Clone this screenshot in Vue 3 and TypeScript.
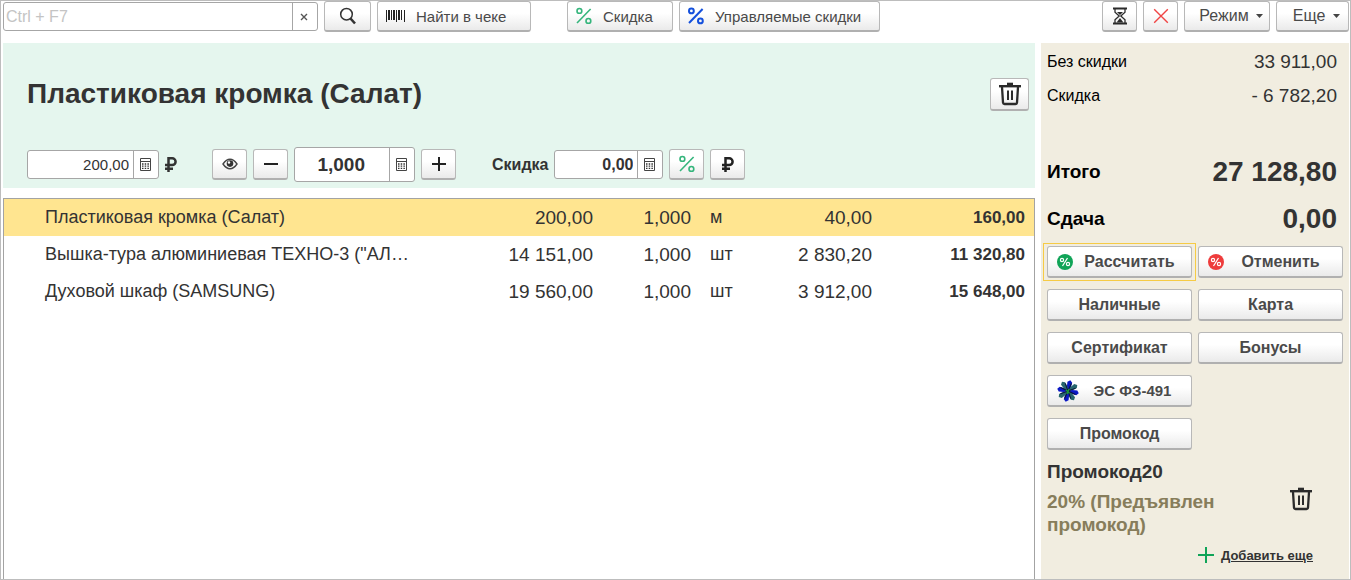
<script setup lang="ts">
import { ref } from 'vue'

interface ReceiptLine {
  name: string
  price: string
  qty: string
  unit: string
  discount: string
  sum: string
}

const lines: ReceiptLine[] = [
  { name: 'Пластиковая кромка (Салат)', price: '200,00', qty: '1,000', unit: 'м', discount: '40,00', sum: '160,00' },
  { name: 'Вышка-тура алюминиевая ТЕХНО-3 ("АЛ…', price: '14 151,00', qty: '1,000', unit: 'шт', discount: '2 830,20', sum: '11 320,80' },
  { name: 'Духовой шкаф (SAMSUNG)', price: '19 560,00', qty: '1,000', unit: 'шт', discount: '3 912,00', sum: '15 648,00' },
]

const selected = ref(0)
const search = ref('')
const price = ref('200,00')
const quantity = ref('1,000')
const discount = ref('0,00')

const bars = [
  [0, 1, 12], [2, 2, 10], [5, 1, 10], [7, 2, 10], [10, 1, 12], [12, 2, 10], [15, 1, 10], [18, 1, 12],
]
const petals = [0, 45, 90, 135, 180, 225, 270, 315]
</script>

<template>
  <div class="window">
    <header class="toolbar">
      <div class="field search">
        <input v-model="search" type="text" placeholder="Ctrl + F7" aria-label="Поиск" />
        <button type="button" class="addon" aria-label="Очистить">
          <svg width="8" height="8" viewBox="0 0 8 8"><path d="M1 1l6 6M7 1L1 7" stroke="#555" stroke-width="1.4" /></svg>
        </button>
      </div>
      <button type="button" class="btn magnify" aria-label="Найти">
        <svg width="18" height="18" viewBox="0 0 18 18" fill="none" stroke="#333">
          <circle cx="7.5" cy="7.2" r="5.8" stroke-width="1.5" /><path d="M11.5 11.5L16 16.5" stroke-width="2.6" />
        </svg>
      </button>
      <button type="button" class="btn find">
        <svg width="19" height="12" viewBox="0 0 19 12" fill="#222">
          <rect v-for="b in bars" :key="b[0]" :x="b[0]" y="0" :width="b[1]" :height="b[2]" />
        </svg>
        <span>Найти в чеке</span>
      </button>
      <button type="button" class="btn disc">
        <svg width="16" height="18" viewBox="0 0 16 18" fill="none" stroke="#35b57c" stroke-width="1.6">
          <circle cx="3.4" cy="3.9" r="2.4" /><circle cx="12.4" cy="13.9" r="2.4" /><path d="M14.6 2L1 16" />
        </svg>
        <span>Скидка</span>
      </button>
      <button type="button" class="btn managed">
        <svg width="16" height="18" viewBox="0 0 16 18" fill="none" stroke="#1450dc" stroke-width="2">
          <circle cx="3.4" cy="3.9" r="2.4" /><circle cx="12.4" cy="13.9" r="2.4" /><path d="M14.6 2L1 16" />
        </svg>
        <span>Управляемые скидки</span>
      </button>
      <span class="spacer"></span>
      <button type="button" class="btn w35" aria-label="Отложить чек">
        <svg width="16" height="18" viewBox="0 0 16 18" fill="none" stroke="#2b2b2b" stroke-width="1.3">
          <path d="M1 1.5h14M1 16.5h14" stroke-width="2" />
          <path d="M3 2v3.2L7.2 9 3 12.8V16M13 2v3.2L8.8 9l4.2 3.8V16" />
          <path d="M5 5h6L8 8zM4.6 15.5L8 11l3.4 4.5z" fill="#2b2b2b" stroke="none" />
        </svg>
      </button>
      <button type="button" class="btn w35" aria-label="Отменить чек">
        <svg width="16" height="16" viewBox="0 0 16 16"><path d="M1.2 1.2l13.6 13.6M14.8 1.2L1.2 14.8" stroke="#f04545" stroke-width="1.4" /></svg>
      </button>
      <button type="button" class="btn mode">
        <span>Режим</span>
        <svg width="7" height="4" viewBox="0 0 7 4"><path d="M0 0h7L3.5 4z" fill="#444" /></svg>
      </button>
      <button type="button" class="btn more">
        <span>Еще</span>
        <svg width="7" height="4" viewBox="0 0 7 4"><path d="M0 0h7L3.5 4z" fill="#444" /></svg>
      </button>
    </header>

    <div class="body">
      <main class="left">
        <section class="item">
          <div class="item-head">
            <h1>Пластиковая кромка (Салат)</h1>
            <button type="button" class="btn trash" aria-label="Удалить строку">
              <svg width="22" height="24" viewBox="0 0 22 24" fill="none" stroke="#2b2b2b" stroke-width="2">
                <path d="M0 4.2h22" stroke-width="2.4" /><path d="M8 2.2h6" stroke-width="3" />
                <path d="M3 5L4 20.6Q4.2 22 5.5 22H16.5Q17.8 22 18 20.6L19 5" stroke-width="2.3" /><path d="M9 8.5V18M13 8.5V18" />
              </svg>
            </button>
          </div>
          <div class="controls">
            <div class="field price">
              <input v-model="price" type="text" aria-label="Цена" />
              <button type="button" class="addon" aria-label="Калькулятор цены">
                <svg width="11" height="13" viewBox="0 0 11 13"><path d="M.5.5h10v12H.5zM.5 3.5h10" fill="none" stroke="#444" /><path d="M2 6h7.5M2 8.2h7.5M2 10.4h7.5" stroke="#333" stroke-width="1.3" stroke-dasharray="1.5 1.2" /></svg>
              </button>
            </div>
            <svg class="rub" width="12" height="15" viewBox="0 0 12 15" fill="none" stroke="#333" stroke-width="2.5">
              <path d="M3.5 15V1.3h3.7a3.3 3.3 0 0 1 0 6.8H0M0 11.7h8" />
            </svg>
            <button type="button" class="btn w35" aria-label="Показать">
              <svg width="16" height="12" viewBox="0 0 16 12">
                <path d="M1 6Q4.3 1.2 8 1.2T15 6Q11.7 10.8 8 10.8T1 6z" fill="none" stroke="#444" stroke-width="1.4" />
                <circle cx="8" cy="5.6" r="3.3" fill="#333" /><circle cx="7" cy="4.5" r="1.2" fill="#fff" />
              </svg>
            </button>
            <button type="button" class="btn w35" aria-label="Уменьшить">
              <svg width="14" height="14" viewBox="0 0 14 14"><path d="M0 7h14" stroke="#222" stroke-width="2" /></svg>
            </button>
            <div class="field quantity">
              <input v-model="quantity" type="text" aria-label="Количество" />
              <button type="button" class="addon" aria-label="Калькулятор количества">
                <svg width="11" height="13" viewBox="0 0 11 13"><path d="M.5.5h10v12H.5zM.5 3.5h10" fill="none" stroke="#444" /><path d="M2 6h7.5M2 8.2h7.5M2 10.4h7.5" stroke="#333" stroke-width="1.3" stroke-dasharray="1.5 1.2" /></svg>
              </button>
            </div>
            <button type="button" class="btn w35" aria-label="Увеличить">
              <svg width="14" height="14" viewBox="0 0 14 14"><path d="M0 7h14M7 0v14" stroke="#222" stroke-width="2" /></svg>
            </button>
            <label class="dlabel" for="discount">Скидка</label>
            <div class="field discount">
              <input id="discount" v-model="discount" type="text" />
              <button type="button" class="addon" aria-label="Калькулятор скидки">
                <svg width="11" height="13" viewBox="0 0 11 13"><path d="M.5.5h10v12H.5zM.5 3.5h10" fill="none" stroke="#444" /><path d="M2 6h7.5M2 8.2h7.5M2 10.4h7.5" stroke="#333" stroke-width="1.3" stroke-dasharray="1.5 1.2" /></svg>
              </button>
            </div>
            <button type="button" class="btn w35" aria-label="Скидка в процентах">
              <svg width="16" height="18" viewBox="0 0 16 18" fill="none" stroke="#35b57c" stroke-width="1.6">
                <circle cx="3.4" cy="3.9" r="2.4" /><circle cx="12.4" cy="13.9" r="2.4" /><path d="M14.6 2L1 16" />
              </svg>
            </button>
            <button type="button" class="btn w35" aria-label="Скидка в рублях">
              <svg width="12" height="15" viewBox="0 0 12 15" fill="none" stroke="#222" stroke-width="2.5">
                <path d="M3.5 15V1.3h3.7a3.3 3.3 0 0 1 0 6.8H0M0 11.7h8" />
              </svg>
            </button>
          </div>
        </section>

        <section class="receipt">
          <table>
            <colgroup>
              <col /><col class="c-price" /><col class="c-qty" /><col class="c-unit" /><col class="c-disc" /><col class="c-sum" />
            </colgroup>
            <tbody>
              <tr v-for="(line, i) in lines" :key="line.name" :class="{ selected: i === selected }" @click="selected = i">
                <td class="name">{{ line.name }}</td>
                <td class="num">{{ line.price }}</td>
                <td class="num">{{ line.qty }}</td>
                <td class="unit">{{ line.unit }}</td>
                <td class="num">{{ line.discount }}</td>
                <td class="sum">{{ line.sum }}</td>
              </tr>
            </tbody>
          </table>
        </section>
      </main>

      <aside class="side">
        <div class="row"><span>Без скидки</span><span class="value">33 911,00</span></div>
        <div class="row"><span>Скидка</span><span class="value">- 6 782,20</span></div>
        <div class="row total first"><span>Итого</span><span class="value">27 128,80</span></div>
        <div class="row total"><span>Сдача</span><span class="value">0,00</span></div>

        <div class="actions">
          <button type="button" class="btn act default">
            <svg width="16" height="16" viewBox="0 0 16 16"><circle cx="8" cy="8" r="8" fill="#10a458" /><g fill="none" stroke="#fff" stroke-width="1.2"><circle cx="5" cy="6" r="1.6" /><circle cx="11" cy="10" r="1.6" /><path d="M10.5 4L5.5 12" /></g></svg>
            <span>Рассчитать</span>
          </button>
          <button type="button" class="btn act">
            <svg width="16" height="16" viewBox="0 0 16 16"><circle cx="8" cy="8" r="8" fill="#ee3c3c" /><g fill="none" stroke="#fff" stroke-width="1.2"><circle cx="5" cy="6" r="1.6" /><circle cx="11" cy="10" r="1.6" /><path d="M10.5 4L5.5 12" /></g></svg>
            <span>Отменить</span>
          </button>
          <button type="button" class="btn act"><span>Наличные</span></button>
          <button type="button" class="btn act"><span>Карта</span></button>
          <button type="button" class="btn act"><span>Сертификат</span></button>
          <button type="button" class="btn act"><span>Бонусы</span></button>
          <button type="button" class="btn act solo sign">
            <svg width="22" height="22" viewBox="-11 -11 22 22">
              <g transform="rotate(12)">
                <path v-for="(a, i) in petals" :key="a" :transform="`rotate(${a})`" d="M0 0L-2-4L-2.5-9L0-11L2.4-9L2-4z" :fill="i % 2 ? '#27666e' : '#0b18c4'" />
                <path v-for="a in petals" :key="a" :transform="`rotate(${a})`" d="M0 0L1.8-8" stroke="#0a1438" stroke-width="1" />
              </g>
              <path d="M-2-1L1 2M-1 3L1-2" stroke="#1c9a3c" stroke-width="1.4" />
            </svg>
            <span>ЭС ФЗ-491</span>
          </button>
          <button type="button" class="btn act solo"><span>Промокод</span></button>
        </div>

        <div class="promo">
          <div class="promo-text">
            <strong>Промокод20</strong>
            <p>20% (Предъявлен промокод)</p>
          </div>
          <button type="button" class="plain" aria-label="Удалить промокод">
            <svg width="22" height="24" viewBox="0 0 22 24" fill="none" stroke="#2b2b2b" stroke-width="2">
              <path d="M0 4.2h22" stroke-width="2.4" /><path d="M8 2.2h6" stroke-width="3" />
              <path d="M3 5L4 20.6Q4.2 22 5.5 22H16.5Q17.8 22 18 20.6L19 5" stroke-width="2.3" /><path d="M9 8.5V18M13 8.5V18" />
            </svg>
          </button>
        </div>
        <div class="add">
          <svg width="16" height="16" viewBox="0 0 16 16"><path d="M0 8h16M8 0v16" stroke="#10a458" stroke-width="2" /></svg>
          <a href="#">Добавить еще</a>
        </div>
      </aside>
    </div>
  </div>
</template>

<style>
body {
  margin: 0;
  background: #fff;
}
</style>

<style scoped>
.window,
.window * {
  box-sizing: border-box;
}
.window {
  display: flex;
  flex-direction: column;
  min-height: 100vh;
  padding: 0 1px 0 2px;
  border: 1px solid #bdbdbd;
  background: #fff;
  color: #333;
  font-family: "Liberation Sans", Arial, sans-serif;
  font-size: 16px;
}
svg {
  display: block;
  flex: none;
}
button,
input {
  font: inherit;
  color: inherit;
}
.toolbar {
  display: flex;
  align-items: center;
  gap: 6px;
  height: 31px;
  color: #4a4a4a;
}
.btn {
  display: flex;
  align-items: center;
  justify-content: center;
  flex: none;
  height: 31px;
  padding: 0;
  border: 1px solid #b8b8b8;
  border-bottom: 2px solid #b0b0b0;
  border-radius: 3px;
  background: linear-gradient(#fff 40%, #eaeaea);
  white-space: nowrap;
}
.w35 {
  width: 35px;
}
.magnify {
  width: 47px;
}
.find,
.disc,
.managed {
  gap: 11px;
  justify-content: flex-start;
  padding-left: 8px;
  font-size: 15px;
}
.find {
  width: 154px;
}
.disc {
  width: 106px;
  margin-left: 30px;
}
.managed {
  width: 201px;
}
.mode {
  width: 86px;
  padding-left: 8px;
  gap: 7px;
}
.more {
  width: 73px;
  padding-left: 8px;
  gap: 8px;
}
.spacer {
  flex: 1;
}
.field {
  display: flex;
  flex: none;
  height: 29px;
  border: 1px solid #a6a6a6;
  border-radius: 3px;
  background: #fff;
}
.field input {
  flex: 1;
  min-width: 0;
  padding: 0 4px 0 2px;
  border: 0;
  outline: 0;
  background: transparent;
  text-align: right;
}
.addon {
  display: flex;
  align-items: center;
  justify-content: center;
  width: 25px;
  padding: 0 2px 0 0;
  border: 0;
  border-left: 1px solid #a6a6a6;
  background: transparent;
}
.search {
  width: 315px;
}
.search input {
  text-align: left;
}
.search input::placeholder {
  color: #c4c4c4;
  opacity: 1;
}
.body {
  display: flex;
  flex: 1;
  gap: 6px;
  margin-top: 11px;
}
.left {
  display: flex;
  flex: 1;
  flex-direction: column;
  gap: 10px;
  min-width: 0;
}
.item {
  height: 145px;
  padding: 33px 6px 0 24px;
  background: #e5f6ee;
}
.item-head {
  display: flex;
  align-items: center;
  justify-content: space-between;
}
h1 {
  margin: 0;
  font-size: 28px;
  line-height: 36px;
}
.trash {
  width: 39px;
  height: 33px;
}
.controls {
  display: flex;
  align-items: center;
  gap: 6px;
  margin-top: 35px;
}
.price {
  width: 132px;
  font-size: 15px;
}
.rub {
  margin-right: 29px;
}
.quantity {
  width: 121px;
  height: 35px;
  font-size: 19px;
  font-weight: bold;
}
.quantity input {
  padding-right: 24px;
}
.dlabel {
  margin-left: 30px;
  font-weight: bold;
}
.discount {
  width: 109px;
  font-weight: bold;
}
.receipt {
  flex: 1;
  border: 1px solid #a3a3a3;
  border-bottom: 0;
}
table {
  width: 100%;
  table-layout: fixed;
  border-collapse: collapse;
  font-size: 19px;
}
td {
  height: 37px;
  padding: 0;
  white-space: nowrap;
}
.c-price {
  width: 169px;
}
.c-qty {
  width: 98px;
}
.c-unit {
  width: 69px;
}
.c-disc {
  width: 112px;
}
.c-sum {
  width: 162px;
}
.selected {
  background: #ffe590;
}
.name {
  padding-left: 41px;
  overflow: hidden;
  font-size: 18px;
  text-overflow: ellipsis;
}
.num,
.sum {
  text-align: right;
}
.unit {
  padding-left: 19px;
  font-size: 18px;
}
.sum {
  padding-right: 9px;
  font-size: 17px;
  font-weight: bold;
}
.side {
  flex: none;
  width: 308px;
  padding: 2px 6px 0;
  background: #f1ede0;
}
.row {
  display: flex;
  align-items: center;
  justify-content: space-between;
  height: 34px;
  padding-right: 6px;
  color: #000;
}
.value {
  color: #333;
  font-size: 19px;
}
.total {
  height: 47px;
  font-size: 19px;
  font-weight: bold;
}
.total .value {
  font-size: 28px;
}
.first {
  margin-top: 35px;
}
.actions {
  display: grid;
  grid-template-columns: 1fr 1fr;
  gap: 11px 6px;
  margin-top: 4px;
}
.act {
  position: relative;
  height: 32px;
  padding: 0 9px;
  color: #4a4a4a;
  font-weight: bold;
}
.act span {
  flex: 1;
  text-align: center;
}
.act svg + span {
  padding-left: 4px;
}
.default::after {
  position: absolute;
  inset: -4px -5px -5px;
  border: 1px solid #f6cb45;
  content: "";
  pointer-events: none;
}
.solo {
  grid-column: 1;
}
.sign {
  font-size: 15px;
}
.promo {
  display: flex;
  align-items: center;
  justify-content: space-between;
  margin-top: 11px;
  padding-right: 31px;
  font-size: 19px;
  font-weight: bold;
}
.promo-text {
  width: 180px;
}
.promo p {
  margin: 7px 0 0;
  color: #877d5b;
  line-height: 23px;
}
.plain {
  padding: 0;
  border: 0;
  background: transparent;
}
.add {
  display: flex;
  align-items: center;
  justify-content: flex-end;
  gap: 7px;
  margin-top: 11px;
  padding-right: 30px;
  font-size: 13px;
  font-weight: bold;
}
.add a {
  color: #333;
}
</style>
